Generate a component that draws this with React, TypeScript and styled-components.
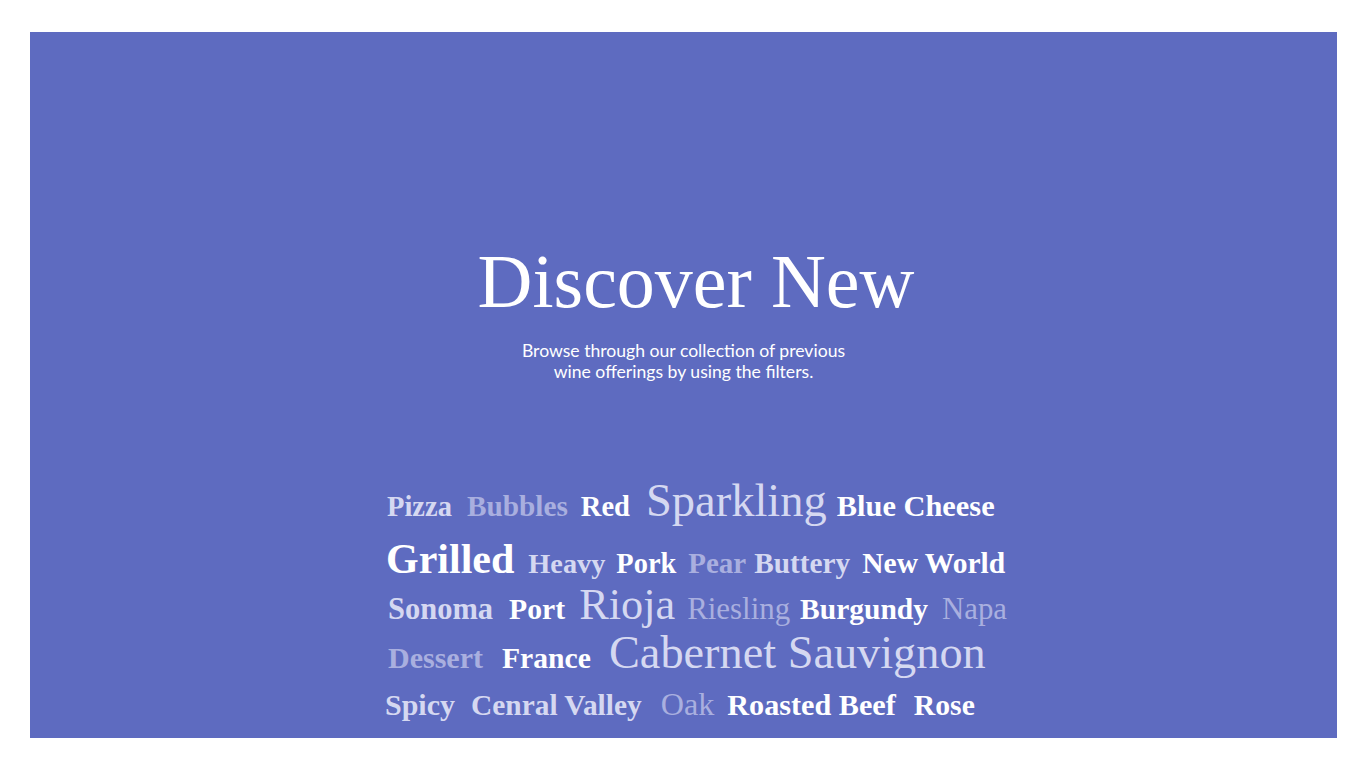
import React from "react";
import styled, { createGlobalStyle } from "styled-components";

const GlobalStyle = createGlobalStyle`
  html, body {
    margin: 0;
    padding: 0;
    background: #ffffff;
  }
  body {
    font-family: "Liberation Serif", serif;
  }
`;

const Page = styled.div`
  width: 1366px;
  height: 768px;
  padding: 32px 29px 30px 30px;
  box-sizing: border-box;
`;

const Panel = styled.section`
  height: 706px;
  background: #5e6bc0;
  display: flex;
  flex-direction: column;
  align-items: center;
  padding-top: 211px;
  box-sizing: border-box;
  overflow: hidden;
`;

const Title = styled.h1`
  margin: 0;
  padding-left: 25px;
  font-family: "Liberation Serif", "Times New Roman", serif;
  font-weight: 400;
  font-size: 76px;
  line-height: 76px;
  color: #ffffff;
  white-space: nowrap;
`;

const Subtitle = styled.p`
  margin: 21px 0 0;
  font-family: Lato, "Noto Sans", sans-serif;
  font-size: 17.6px;
  line-height: 21px;
  color: #ffffff;
  text-align: center;
`;

const Cloud = styled.div`
  margin-top: 96px;
  width: 597px;
  display: flex;
  flex-direction: column;
`;

const Row = styled.div<{ $top: number }>`
  display: flex;
  align-items: baseline;
  flex-wrap: nowrap;
  margin-top: ${(p) => p.$top}px;
`;

type Tone = "white" | "light" | "faded";

const toneColor: Record<Tone, string> = {
  white: "#ffffff",
  light: "#d5d8f1",
  faded: "#a9afdf",
};

const Word = styled.a<{ $size: number; $tone: Tone; $bold: boolean; $gap: number }>`
  flex-shrink: 0;
  white-space: nowrap;
  font-family: "Liberation Serif", "Times New Roman", serif;
  font-size: ${(p) => p.$size}px;
  font-weight: ${(p) => (p.$bold ? 700 : 400)};
  line-height: 1;
  color: ${(p) => toneColor[p.$tone]};
  margin-left: ${(p) => p.$gap}px;
  text-decoration: none;
  cursor: pointer;
`;

type W = { t: string; s: number; c: Tone; b: boolean; g: number };

const rows: { top: number; words: W[] }[] = [
  {
    top: 0,
    words: [
      { t: "Pizza", s: 28.5, c: "light", b: true, g: 2 },
      { t: "Bubbles", s: 29.3, c: "faded", b: true, g: 15 },
      { t: "Red", s: 28.5, c: "white", b: true, g: 13 },
      { t: "Sparkling", s: 46.5, c: "light", b: false, g: 16 },
      { t: "Blue Cheese", s: 30.4, c: "white", b: true, g: 10 },
    ],
  },
  {
    top: 13,
    words: [
      { t: "Grilled", s: 42, c: "white", b: true, g: 1 },
      { t: "Heavy", s: 28.3, c: "light", b: true, g: 14 },
      { t: "Pork", s: 28.4, c: "white", b: true, g: 11 },
      { t: "Pear", s: 29, c: "faded", b: true, g: 12 },
      { t: "Buttery", s: 29.3, c: "light", b: true, g: 8 },
      { t: "New World", s: 29.5, c: "white", b: true, g: 12 },
    ],
  },
  {
    top: 3,
    words: [
      { t: "Sonoma", s: 30.5, c: "light", b: true, g: 3 },
      { t: "Port", s: 29.7, c: "white", b: true, g: 16 },
      { t: "Rioja", s: 44.3, c: "light", b: false, g: 14 },
      { t: "Riesling", s: 30.9, c: "faded", b: false, g: 12 },
      { t: "Burgundy", s: 29.5, c: "white", b: true, g: 10 },
      { t: "Napa", s: 30.8, c: "faded", b: false, g: 14 },
    ],
  },
  {
    top: 3,
    words: [
      { t: "Dessert", s: 30, c: "faded", b: true, g: 3 },
      { t: "France", s: 29.7, c: "white", b: true, g: 19 },
      { t: "Cabernet Sauvignon", s: 46.3, c: "light", b: false, g: 18 },
    ],
  },
  {
    top: 12,
    words: [
      { t: "Spicy", s: 30, c: "light", b: true, g: 0 },
      { t: "Cenral Valley", s: 29.4, c: "light", b: true, g: 16 },
      { t: "Oak", s: 32.2, c: "faded", b: false, g: 19 },
      { t: "Roasted Beef", s: 30.2, c: "white", b: true, g: 13 },
      { t: "Rose", s: 29.7, c: "white", b: true, g: 18 },
    ],
  },
];

export default function App() {
  return (
    <>
      <GlobalStyle />
      <Page>
        <Panel>
          <Title>Discover New</Title>
          <Subtitle>
            Browse through our collection of previous
            <br />
            wine offerings by using the filters.
          </Subtitle>
          <Cloud>
            {rows.map((row, i) => (
              <Row key={i} $top={row.top}>
                {row.words.map((w) => (
                  <Word key={w.t} $size={w.s} $tone={w.c} $bold={w.b} $gap={w.g}>
                    {w.t}
                  </Word>
                ))}
              </Row>
            ))}
          </Cloud>
        </Panel>
      </Page>
    </>
  );
}
